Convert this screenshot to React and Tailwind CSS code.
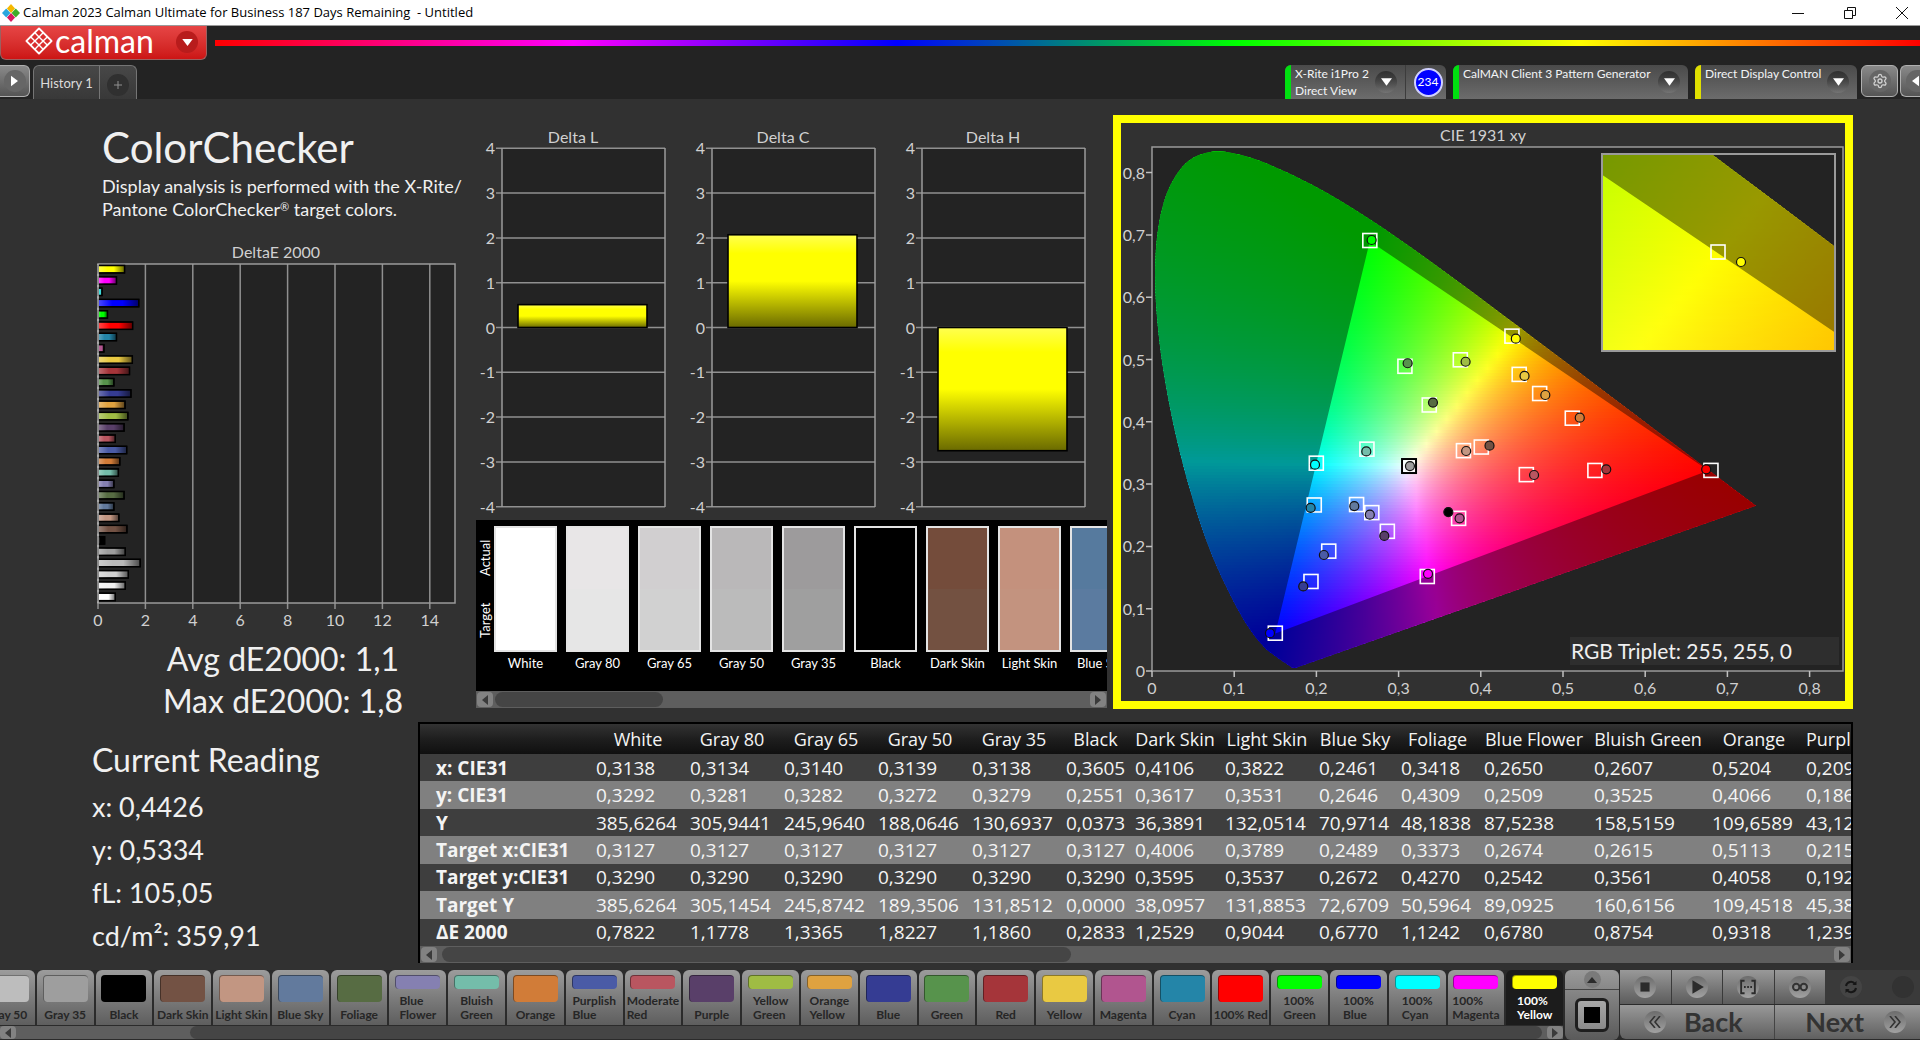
import { useState } from 'react';
import { Settings } from 'lucide-react';

const PATCHES = {
  gray50: '#b9b9b9',
  gray65: '#d0d0d0',
  gray35: '#9e9e9e',
  black: '#000000',
  darkSkin: '#735244',
  lightSkin: '#c29682',
  blueSky: '#627a9d',
  foliage: '#576c43',
  blueFlower: '#8580b1',
  bluishGreen: '#74bdaa',
  orange: '#d17c38',
  purplishBlue: '#4a5ba6',
  moderateRed: '#b95660',
  purple: '#593f69',
  yellowGreen: '#9fbc44',
  orangeYellow: '#dfa240',
  blue: '#353c93',
  green: '#57934c',
  red: '#a5353a',
  yellow: '#e9c942',
  magenta: '#b1558f',
  cyan: '#2485a8',
};

// Top to bottom, as measured
const deltaE = [
  ['#ffff00', 1.12],
  ['#ff00ff', 0.78],
  ['#40e0e0', 0.17],
  ['#0000ff', 1.72],
  ['#00ff00', 0.4],
  ['#ff0000', 1.46],
  [PATCHES.cyan, 0.78],
  [PATCHES.magenta, 0.25],
  [PATCHES.yellow, 1.45],
  [PATCHES.red, 1.33],
  [PATCHES.green, 0.67],
  [PATCHES.blue, 1.39],
  [PATCHES.orangeYellow, 1.14],
  [PATCHES.yellowGreen, 1.26],
  [PATCHES.purple, 1.1],
  [PATCHES.moderateRed, 0.73],
  [PATCHES.purplishBlue, 1.21],
  [PATCHES.orange, 0.92],
  [PATCHES.bluishGreen, 0.86],
  [PATCHES.blueFlower, 0.67],
  [PATCHES.foliage, 1.1],
  [PATCHES.blueSky, 0.67],
  [PATCHES.lightSkin, 0.88],
  [PATCHES.darkSkin, 1.22],
  ['#000000', 0.28],
  [PATCHES.gray35, 1.15],
  [PATCHES.gray50, 1.78],
  [PATCHES.gray65, 1.28],
  ['#f0f0f0', 1.15],
  ['#ffffff', 0.73],
];

const swatches = [
  { name: 'White', actual: '#ffffff', target: '#ffffff' },
  { name: 'Gray 80', actual: '#e8e6e7', target: '#e6e6e6' },
  { name: 'Gray 65', actual: '#d1cfd0', target: '#d1d1d1' },
  { name: 'Gray 50', actual: '#bab8b9', target: '#bbbbbb' },
  { name: 'Gray 35', actual: '#9d9b9c', target: '#9f9f9f' },
  { name: 'Black', actual: '#000000', target: '#000000' },
  { name: 'Dark Skin', actual: '#744c3b', target: '#735141' },
  { name: 'Light Skin', actual: '#c4917d', target: '#c3937f' },
  { name: 'Blue Sky', actual: '#567a9e', target: '#5b7ba0' },
];

const columns = [
  'White', 'Gray 80', 'Gray 65', 'Gray 50', 'Gray 35', 'Black', 'Dark Skin',
  'Light Skin', 'Blue Sky', 'Foliage', 'Blue Flower', 'Bluish Green', 'Orange', 'Purplish Blue',
];

const rows = [
  ['x: CIE31', '0,3138', '0,3134', '0,3140', '0,3139', '0,3138', '0,3605', '0,4106', '0,3822', '0,2461', '0,3418', '0,2650', '0,2607', '0,5204', '0,2091'],
  ['y: CIE31', '0,3292', '0,3281', '0,3282', '0,3272', '0,3279', '0,2551', '0,3617', '0,3531', '0,2646', '0,4309', '0,2509', '0,3525', '0,4066', '0,1862'],
  ['Y', '385,6264', '305,9441', '245,9640', '188,0646', '130,6937', '0,0373', '36,3891', '132,0514', '70,9714', '48,1838', '87,5238', '158,5159', '109,6589', '43,1207'],
  ['Target x:CIE31', '0,3127', '0,3127', '0,3127', '0,3127', '0,3127', '0,3127', '0,4006', '0,3789', '0,2489', '0,3373', '0,2674', '0,2615', '0,5113', '0,2150'],
  ['Target y:CIE31', '0,3290', '0,3290', '0,3290', '0,3290', '0,3290', '0,3290', '0,3595', '0,3537', '0,2672', '0,4270', '0,2542', '0,3561', '0,4058', '0,1924'],
  ['Target Y', '385,6264', '305,1454', '245,8742', '189,3506', '131,8512', '0,0000', '38,0957', '131,8853', '72,6709', '50,5964', '89,0925', '160,6156', '109,4518', '45,3811'],
  ['ΔE 2000', '0,7822', '1,1778', '1,3365', '1,8227', '1,1860', '0,2833', '1,2529', '0,9044', '0,6770', '1,1242', '0,6780', '0,8754', '0,9318', '1,2394'],
];

const patchButtons = [
  ['Gray 50', '#bdbdbd'],
  ['Gray 35', PATCHES.gray35],
  ['Black', PATCHES.black],
  ['Dark Skin', PATCHES.darkSkin],
  ['Light Skin', PATCHES.lightSkin],
  ['Blue Sky', PATCHES.blueSky],
  ['Foliage', PATCHES.foliage],
  ['Blue Flower', PATCHES.blueFlower, true],
  ['Bluish Green', PATCHES.bluishGreen, true],
  ['Orange', PATCHES.orange],
  ['Purplish Blue', PATCHES.purplishBlue, true],
  ['Moderate Red', PATCHES.moderateRed, true],
  ['Purple', PATCHES.purple],
  ['Yellow Green', PATCHES.yellowGreen, true],
  ['Orange Yellow', PATCHES.orangeYellow, true],
  ['Blue', PATCHES.blue],
  ['Green', PATCHES.green],
  ['Red', PATCHES.red],
  ['Yellow', PATCHES.yellow],
  ['Magenta', PATCHES.magenta],
  ['Cyan', PATCHES.cyan],
  ['100% Red', '#ff0000'],
  ['100% Green', '#00ff00', true],
  ['100% Blue', '#0000ff', true],
  ['100% Cyan', '#00ffff', true],
  ['100% Magenta', '#ff00ff', true],
  ['100% Yellow', '#ffff00', true],
];

// [target x, target y, actual x, actual y, fill]
const points = [
  [0.4006, 0.3595, 0.4106, 0.3617, PATCHES.darkSkin],
  [0.3789, 0.3537, 0.3822, 0.3531, PATCHES.lightSkin],
  [0.2489, 0.2672, 0.2461, 0.2646, PATCHES.blueSky],
  [0.3373, 0.427, 0.3418, 0.4309, PATCHES.foliage],
  [0.2674, 0.2542, 0.265, 0.2509, PATCHES.blueFlower],
  [0.2615, 0.3561, 0.2607, 0.3525, PATCHES.bluishGreen],
  [0.5113, 0.4058, 0.5204, 0.4066, PATCHES.orange],
  [0.215, 0.1924, 0.2091, 0.1862, PATCHES.purplishBlue],
  [0.4554, 0.3152, 0.4648, 0.3146, PATCHES.moderateRed],
  [0.2863, 0.2242, 0.2826, 0.2168, PATCHES.purple],
  [0.3751, 0.4995, 0.3815, 0.4964, PATCHES.yellowGreen],
  [0.4716, 0.4454, 0.4785, 0.443, PATCHES.orangeYellow],
  [0.1934, 0.1437, 0.184, 0.1357, PATCHES.blue],
  [0.3077, 0.4891, 0.311, 0.494, PATCHES.green],
  [0.5388, 0.3219, 0.5526, 0.3237, PATCHES.red],
  [0.4467, 0.4761, 0.4532, 0.4737, PATCHES.yellow],
  [0.373, 0.245, 0.3742, 0.245, PATCHES.magenta],
  [0.1974, 0.2665, 0.193, 0.2617, PATCHES.cyan],
  [0.68, 0.322, 0.6742, 0.3237, '#ff0000'],
  [0.265, 0.691, 0.2672, 0.6918, '#00ff00'],
  [0.15, 0.0607, 0.1435, 0.0607, '#0000ff'],
  [0.1999, 0.3336, 0.1983, 0.3311, '#00ffff'],
  [0.3349, 0.1517, 0.3358, 0.156, '#ff00ff'],
  [0.4379, 0.5375, 0.4426, 0.5334, '#ffff00'],
];

const locus = [
  [0.1741, 0.005], [0.1714, 0.0051], [0.1689, 0.0069], [0.1644, 0.0109], [0.1566, 0.0177],
  [0.144, 0.0297], [0.1355, 0.0399], [0.1241, 0.0578], [0.1096, 0.0868], [0.0913, 0.1327],
  [0.0687, 0.2007], [0.0454, 0.295], [0.0235, 0.4127], [0.0082, 0.5384], [0.0039, 0.6548],
  [0.0139, 0.7502], [0.0389, 0.812], [0.0743, 0.8338], [0.1142, 0.8262], [0.1547, 0.8059],
  [0.1929, 0.7816], [0.2296, 0.7543], [0.2658, 0.7243], [0.3016, 0.6923], [0.3373, 0.6589],
  [0.3731, 0.6245], [0.4087, 0.5896], [0.4441, 0.5547], [0.4788, 0.5202], [0.5125, 0.4866],
  [0.5448, 0.4544], [0.5752, 0.4242], [0.627, 0.3725], [0.6658, 0.334], [0.6915, 0.3083],
  [0.719, 0.2809], [0.7347, 0.2653],
];

const gamut = [[0.265, 0.69], [0.677, 0.322], [0.15, 0.06]];

const xyToRgb = (x, y) => {
  const z = 1 - x - y;
  const rgb = [
    2.4935 * x - 0.9314 * y - 0.4027 * z,
    -0.8295 * x + 1.7627 * y + 0.0236 * z,
    0.0358 * x - 0.0762 * y + 0.9569 * z,
  ].map(v => Math.max(v, 0));
  const max = Math.max(...rgb);
  return `rgb(${rgb.map(v => Math.round((v / max) * 255)).join(',')})`;
};

// Smooth path through the locus points (Catmull-Rom), closed by the line of purples
const locusPath = (px, py) => {
  const p = locus.map(([x, y]) => [px(x), py(y)]);
  let d = `M${p[0]}`;
  for (let i = 0; i < p.length - 1; i++) {
    const a = p[i - 1] || p[i];
    const b = p[i];
    const c = p[i + 1];
    const e = p[i + 2] || c;
    d += `C${b[0] + (c[0] - a[0]) / 6},${b[1] + (c[1] - a[1]) / 6} ${c[0] - (e[0] - b[0]) / 6},${c[1] - (e[1] - b[1]) / 6} ${c}`;
  }
  return d + 'Z';
};

const ChromaField = ({ id, left, top, width, height, x0, y0, sx, sy, stops }) => {
  const px = x => x0 + x * sx;
  const py = y => y0 - y * sy;
  const outline = locusPath(px, py);
  const triangle = `M${gamut.map(([x, y]) => `${px(x)},${py(y)}`).join('L')}Z`;
  const step = 3;
  const lines = Array.from({ length: Math.ceil(height / step) }, (_, i) => top + i * step);

  return (
    <g clipPath={`url(#${id}-box)`}>
      <defs>
        <clipPath id={`${id}-box`}>
          <rect x={left} y={top} width={width} height={height} />
        </clipPath>
        <clipPath id={`${id}-locus`}>
          <path d={outline} />
        </clipPath>
        {lines.map((y, i) => (
          <linearGradient key={i} id={`${id}-${i}`}>
            {Array.from({ length: stops + 1 }, (_, s) => (
              <stop
                key={s}
                offset={s / stops}
                stopColor={xyToRgb((left + (width * s) / stops - x0) / sx, (y0 - y - step / 2) / sy)}
              />
            ))}
          </linearGradient>
        ))}
      </defs>
      <g clipPath={`url(#${id}-locus)`}>
        {lines.map((y, i) => (
          <rect key={i} x={left} y={y} width={width} height={step + 1} fill={`url(#${id}-${i})`} />
        ))}
        <path d={outline + triangle} fillRule="evenodd" fill="#000" fillOpacity="0.4" />
      </g>
    </g>
  );
};

const Target = ({ x, y }) => (
  <rect x={x - 7} y={y - 7} width="14" height="14" fill="none" stroke="#fff" strokeWidth="1.6" />
);

const Actual = ({ x, y, fill }) => (
  <circle cx={x} cy={y} r="4.5" fill={fill} stroke="#111" strokeWidth="1.2" />
);

const CieChart = () => {
  const px = x => 31 + x * 822;
  const py = y => 548 - y * 623;
  return (
    <svg viewBox="0 0 724 578" className="block w-full h-auto" role="img" aria-label="CIE 1931 xy">
      <text x="362" y="18" textAnchor="middle" fontSize="16" fill="#d0d0d0">CIE 1931 xy</text>
      <rect x="31" y="24" width="691" height="524" fill="#232323" />
      <ChromaField id="cie" left={31} top={25} width={610} height={523} x0={31} y0={548} sx={822} sy={623} stops={60} />
      <rect x="31" y="24" width="691" height="524" fill="none" stroke="#9a9a9a" strokeWidth="1.5" />
      {[0, 1, 2, 3, 4, 5, 6, 7, 8].map(n => (
        <g key={n} fontSize="16" fill="#d0d0d0">
          <path d={`M${px(n / 10)} 548v6M31 ${py(n / 10)}h-6`} stroke="#c0c0c0" strokeWidth="1.5" />
          <text x={px(n / 10)} y="571" textAnchor="middle">{n ? `0,${n}` : '0'}</text>
          <text x="24" y={py(n / 10) + 6} textAnchor="end">{n ? `0,${n}` : '0'}</text>
        </g>
      ))}

      {points.map(([tx, ty], i) => <Target key={i} x={px(tx)} y={py(ty)} />)}
      {points.map(([, , ax, ay, fill], i) => <Actual key={i} x={px(ax)} y={py(ay)} fill={fill} />)}
      <Actual x={px(0.3605)} y={py(0.2551)} fill="#000" />

      {/* White point */}
      <rect x={px(0.3127) - 7} y={py(0.329) - 7} width="14" height="14" fill="none" stroke="#000" strokeWidth="2" />
      <rect x={px(0.3127) - 5} y={py(0.329) - 5} width="10" height="10" fill="none" stroke="#fff" strokeWidth="1.5" />
      <Actual x={px(0.3138)} y={py(0.329)} fill="#9e9e9e" />

      {/* Magnified view of the current reading */}
      <rect x="481" y="31" width="233" height="197" fill="#232323" />
      <ChromaField
        id="zoom" left={481} top={31} width={233} height={197}
        x0={597 - 0.4379 * 4932} y0={129 + 0.5359 * 3737} sx={4932} sy={3737} stops={24}
      />
      <rect x="481" y="31" width="233" height="197" fill="none" stroke="#9a9a9a" strokeWidth="2" />
      <Target x={597} y={129} />
      <Actual x={620} y={139} fill="#ffff00" />

      <rect x="449" y="514" width="269" height="28" fill="#2e2e2e" />
      <text x="450" y="536" fontSize="21" fill="#f0f0f0">RGB Triplet: 255, 255, 0</text>
    </svg>
  );
};

const DeltaEChart = () => (
  <svg viewBox="0 0 388 388" className="block w-full h-auto" role="img" aria-label="DeltaE 2000">
    <defs>
      <linearGradient id="bar-shade">
        <stop offset="0" stopColor="#fff" stopOpacity="0.3" />
        <stop offset="0.35" stopColor="#fff" stopOpacity="0" />
        <stop offset="0.6" stopColor="#000" stopOpacity="0" />
        <stop offset="1" stopColor="#000" stopOpacity="0.6" />
      </linearGradient>
    </defs>
    <text x="196" y="16" textAnchor="middle" fontSize="16" fill="#d0d0d0">DeltaE 2000</text>
    <rect x="18" y="22" width="357" height="339" fill="#232323" />
    {[0, 2, 4, 6, 8, 10, 12, 14].map(n => (
      <g key={n}>
        <path d={`M${18 + n * 23.7} 22V367`} stroke="#909090" strokeWidth="1.5" />
        <text x={18 + n * 23.7} y="384" textAnchor="middle" fontSize="16" fill="#d0d0d0">{n}</text>
      </g>
    ))}
    <rect x="18" y="22" width="357" height="339" fill="none" stroke="#9a9a9a" strokeWidth="1.5" />
    {deltaE.map(([color, value], i) => {
      const y = 23.5 + i * 11.3;
      return (
        <g key={i} stroke="#000" strokeWidth="1.3">
          <rect x="18" y={y} width={value * 23.7} height="7.4" fill={color} />
          <rect x="18" y={y} width={value * 23.7} height="7.4" fill="url(#bar-shade)" />
        </g>
      );
    })}
    <path d="M18 22V361" stroke="#b0b0b0" strokeWidth="1.5" />
  </svg>
);

const DeltaChart = ({ title, value }) => {
  const zero = 202.5;
  const unit = 44.8;
  const top = value > 0 ? zero - value * unit : zero;
  return (
    <svg viewBox="0 0 210 392" className="block w-[210px] h-auto" role="img" aria-label={title}>
      <defs>
        <linearGradient id="delta-bar" x1="0" y1="0" x2="0" y2="1">
          <stop offset="0" stopColor="#ffff50" />
          <stop offset="0.2" stopColor="#ffff00" />
          <stop offset="0.5" stopColor="#ffff00" />
          <stop offset="1" stopColor="#6a6a00" />
        </linearGradient>
      </defs>
      <text x="105" y="18" textAnchor="middle" fontSize="16" fill="#d0d0d0">{title}</text>
      <rect x="34" y="23" width="163" height="359" fill="#232323" />
      {[4, 3, 2, 1, 0, -1, -2, -3, -4].map(n => (
        <g key={n}>
          <path d={`M28 ${zero - n * unit}H197`} stroke="#909090" strokeWidth="1.5" />
          <text x="27" y={zero - n * unit + 6} textAnchor="end" fontSize="16" fill="#d0d0d0">{n}</text>
        </g>
      ))}
      <path d="M34 23V382M197 23V382" stroke="#9a9a9a" strokeWidth="1.5" />
      <rect x="50" y={top} width="129" height={Math.abs(value) * unit} fill="url(#delta-bar)" stroke="#000" strokeWidth="1.6" />
    </svg>
  );
};

const ArrowDown = () => (
  <span className="flex size-[22px] shrink-0 items-center justify-center rounded-full bg-linear-to-b from-black/40 to-white/10">
    <svg viewBox="0 0 12 8" className="w-[11px] h-2"><path d="M0 0h12L6 8z" fill="#fff" /></svg>
  </span>
);

const ScrollArrow = ({ left, label }) => (
  <button type="button" aria-label={label} className="flex w-4 h-full shrink-0 items-center justify-center rounded-sm bg-[#828282]">
    <svg viewBox="0 0 6 10" className="h-[10px] w-[6px]">
      <path d={left ? 'M6 0v10L0 5z' : 'M0 0v10l6-5z'} fill="#3a3a3a" />
    </svg>
  </button>
);

const ScrollBar = ({ before = 'w-[2px]', thumb }) => (
  <div className="flex h-[17px] w-full items-stretch bg-[#5e5e5e] p-px">
    <ScrollArrow left label="Scroll left" />
    <div className="flex flex-1">
      <div className={before} />
      <div className={`${thumb} rounded-lg bg-[#454545]`} />
    </div>
    <ScrollArrow label="Scroll right" />
  </div>
);

const DeviceTab = ({ strip, className, children, extra }) => (
  <div className={`flex h-[34px] overflow-hidden rounded-t-md bg-linear-to-b from-[#4a4a4a] to-[#6c6c6c] ${className}`}>
    <span className={`w-[6px] shrink-0 ${strip}`} />
    <button type="button" aria-haspopup="menu" className="flex flex-1 justify-between pl-1 pr-2 text-left text-xs leading-[17px] whitespace-nowrap text-gray-100">
      <span>{children}</span>
      <span className="flex h-full items-center"><ArrowDown /></span>
    </button>
    {extra}
  </div>
);

const TitleBar = () => (
  <header className="flex h-[26px] items-center border-b border-[#9a9a9a] bg-white pl-[2px] font-['Open_Sans',sans-serif] text-black">
    <svg viewBox="0 0 20 20" className="size-[18px]">
      <path d="M10 0l4.500 5-4.500 5-4.500-5z" fill="#f5b800" />
      <path d="M4.700 5l4.700 5-4.700 5L0 10z" fill="#2aa6dd" />
      <path d="M15.300 5l4.700 5-4.700 5-4.700-5z" fill="#3fae2a" />
      <path d="M10 10l4.500 5-4.500 5-4.500-5z" fill="#d81b60" />
    </svg>
    <span className="ml-[3px] flex-1 text-[13px] whitespace-pre">Calman 2023 Calman Ultimate for Business 187 Days Remaining  - Untitled</span>
    <div className="flex gap-10 pr-3">
      <button type="button" aria-label="Minimize">
        <svg viewBox="0 0 12 12" className="size-3"><path d="M0 6.500h12" stroke="#111" /></svg>
      </button>
      <button type="button" aria-label="Restore">
        <svg viewBox="0 0 12 12" className="size-3" fill="none" stroke="#111">
          <path d="M.5 3.500h8v8h-8zM3.500 3.500v-3h8v8h-3" />
        </svg>
      </button>
      <button type="button" aria-label="Close">
        <svg viewBox="0 0 12 12" className="size-3"><path d="M0 0l12 12M12 0L0 12" stroke="#111" /></svg>
      </button>
    </div>
  </header>
);

const Toolbar = () => (
  <div className="bg-[#232323]">
    <div className="flex h-[34px] items-start">
      <button type="button" aria-haspopup="menu" className="flex h-[34px] w-[207px] items-center rounded-b-md border border-t-0 border-[#9b6060] bg-linear-to-b from-[#e64545] to-[#cc1414] pb-[3px] pl-6 text-white">
        <svg viewBox="0 0 28 28" className="size-7">
          <path d="M14 1.500L26.500 14 14 26.500 1.500 14z" fill="#fff" stroke="#fff" strokeWidth="2" strokeLinejoin="round" />
          <g fill="#d92e2e">
            <path d="M14 2.700l3.100 3.100-3.100 3.100-3.100-3.100z" />
            <path d="M9.900 6.800l3.100 3.100-3.100 3.100-3.100-3.100z" />
            <path d="M18.100 6.800l3.100 3.100-3.100 3.100-3.100-3.100z" />
            <path d="M5.800 10.900l3.100 3.100-3.100 3.100L2.700 14z" />
            <path d="M14 10.900l3.100 3.100-3.100 3.100-3.100-3.100z" />
            <path d="M22.200 10.900l3.100 3.100-3.100 3.100-3.100-3.100z" />
            <path d="M9.900 15l3.100 3.100-3.100 3.100-3.100-3.100z" />
            <path d="M18.100 15l3.100 3.100-3.100 3.100-3.100-3.100z" />
            <path d="M14 19.100l3.100 3.100-3.100 3.100-3.100-3.100z" />
          </g>
        </svg>
        <span className="ml-[2px] flex-1 text-left text-[32px] leading-[28px]">calman</span>
        <span className="mt-[2px] mr-2 flex size-[22px] items-center justify-center rounded-full bg-[#b81c1c]">
          <svg viewBox="0 0 12 8" className="w-[11px] h-[7px]"><path d="M0 0h12L6 8z" fill="#fff" /></svg>
        </span>
      </button>
      <div className="mt-[14px] ml-2 h-[6px] flex-1 bg-[linear-gradient(90deg,#f00_0%,#f0f_21%,#00f_40%,#0f0_60%,#ff0_80%,#f00_100%)]" />
    </div>

    <div className="mt-[5px] flex h-[34px] overflow-hidden">
      <button type="button" aria-label="Show panel" className="flex h-8 w-[30px] items-center justify-center rounded-r-md border border-l-0 border-[#b0b0b0] bg-linear-to-b from-[#8a8a8a] to-[#555]">
        <span className="flex size-[22px] items-center justify-center rounded-full bg-[#666]">
          <svg viewBox="0 0 8 12" className="w-[7px] h-3"><path d="M0 0v12l8-6z" fill="#fff" /></svg>
        </span>
      </button>
      <div className="ml-[3px] flex rounded-t-md border border-b-0 border-[#757575] bg-linear-to-b from-[#484848] to-[#383838] text-[#dcdcdc]">
        <button type="button" className="w-[66px] border-r border-[#757575] pt-[2px] text-[13px]">History 1</button>
        <button type="button" aria-label="Add history" className="flex w-[36px] items-center justify-center pt-1">
          <span className="flex size-[22px] items-center justify-center rounded-full bg-[#303030]">
            <svg viewBox="0 0 8 8" className="size-2"><path d="M4 0v8M0 4h8" stroke="#909090" /></svg>
          </span>
        </button>
      </div>
      <div className="flex-1" />
      <DeviceTab
        strip="bg-[#00e010]"
        className="w-[161px]"
        extra={
          <div className="flex w-[41px] items-center justify-center border-l border-[#3c3c3c] pl-1">
            <span className="flex size-[29px] items-center justify-center rounded-full border-2 border-[#d0d0ff] bg-[#0000ff] text-xs text-white">234</span>
          </div>
        }
      >
        X-Rite i1Pro 2<br />Direct View
      </DeviceTab>
      <DeviceTab strip="bg-[#00e010]" className="ml-[7px] w-[235px]">CalMAN Client 3 Pattern Generator</DeviceTab>
      <DeviceTab strip="bg-[#e0e000]" className="ml-[7px] w-[162px]">Direct Display Control</DeviceTab>
      <button type="button" aria-label="Settings" className="ml-1 flex h-8 w-[37px] items-center justify-center rounded-md border border-[#b0b0b0] bg-linear-to-b from-[#8a8a8a] to-[#555]">
        <span className="flex size-[22px] items-center justify-center rounded-full bg-[#666]">
          <Settings className="size-4 text-[#d0d0d0]" />
        </span>
      </button>
      <button type="button" aria-label="Hide panel" className="ml-[2px] flex h-8 w-5 items-center justify-end rounded-l-md border border-r-0 border-[#b0b0b0] bg-linear-to-b from-[#8a8a8a] to-[#555]">
        <span className="flex h-[22px] w-[14px] items-center justify-end rounded-l-full bg-[#666] pr-px">
          <svg viewBox="0 0 8 12" className="w-[7px] h-3"><path d="M8 0v12L0 6z" fill="#fff" /></svg>
        </span>
      </button>
    </div>
  </div>
);

const SwatchPanel = () => (
  <div className="mt-[3px] ml-2">
    <div className="flex h-[171px] overflow-hidden bg-black pt-[6px] text-white">
      <div className="flex h-[126px] w-[18px] shrink-0 flex-col items-center text-[13px] leading-[16px]">
        <span className="h-[63px] rotate-180 text-center [writing-mode:vertical-rl]">Actual</span>
        <span className="h-[63px] rotate-180 text-center [writing-mode:vertical-rl]">Target</span>
      </div>
      <div className="flex gap-[9px]">
        {swatches.map(s => (
          <div key={s.name} className="w-[63px] shrink-0 text-center">
            <div className="flex h-[126px] flex-col border-2 border-[#e4e4e4]">
              <div className="flex-1" style={{ backgroundColor: s.actual }} />
              <div className="flex-1" style={{ backgroundColor: s.target }} />
            </div>
            <div className="mt-[2px] text-[13px] leading-[18px] whitespace-nowrap">{s.name}</div>
          </div>
        ))}
      </div>
    </div>
    <ScrollBar thumb="w-[168px]" />
  </div>
);

const DataTable = () => (
  <div className="min-w-0 flex-1 overflow-hidden border-2 border-b-0 border-black font-['Open_Sans',sans-serif] text-[#f4f4f4]">
    <div className="overflow-hidden">
      <table className="h-[222px] w-[1494px] table-fixed border-collapse text-left text-[19px] leading-[22px] whitespace-nowrap">
        <colgroup>
          <col className="w-[176px]" />
          <col className="w-[94px]" />
          <col className="w-[94px]" />
          <col className="w-[94px]" />
          <col className="w-[94px]" />
          <col className="w-[94px]" />
          <col className="w-[69px]" />
          <col className="w-[90px]" />
          <col className="w-[94px]" />
          <col className="w-[82px]" />
          <col className="w-[83px]" />
          <col className="w-[110px]" />
          <col className="w-[118px]" />
          <col className="w-[94px]" />
          <col className="w-[108px]" />
        </colgroup>
        <thead>
          <tr className="h-[30px] bg-linear-to-b from-[#333] via-[#1e1e1e] to-[#101010] text-lg">
            <td />
            {columns.map(c => (
              <th key={c} scope="col" className="pr-[10px] text-center font-normal last:pr-0 last:text-left">{c}</th>
            ))}
          </tr>
        </thead>
        <tbody>
          {rows.map(([label, ...cells]) => (
            <tr key={label} className="bg-[#3e3e3e] even:bg-[#808080]">
              <th scope="row" className="pl-4 font-bold">{label}</th>
              {cells.map((c, i) => <td key={i}>{c}</td>)}
            </tr>
          ))}
        </tbody>
      </table>
    </div>
    <ScrollBar before="w-[5px]" thumb="w-[629px]" />
  </div>
);

const RoundIcon = ({ children }) => (
  <span className="flex size-[22px] items-center justify-center rounded-full bg-linear-to-b from-[#6c6c6c] to-[#a2a2a2]">{children}</span>
);

const transport = [
  ['Stop', <path key="i" d="M3 3h8v8H3z" fill="#2b2b2b" />],
  ['Play', <path key="i" d="M3 1l10 6-10 6z" fill="#2b2b2b" />],
  ['Read series', (
    <g key="i" stroke="#2b2b2b" strokeWidth="1.600" fill="none">
      <path d="M4 1.500H1v11h3M10 1.500h3v11h-3" /><path d="M3.500 7h1.500M6.300 7h1.500M9 7h1.500" />
    </g>
  )],
  ['Read continuous', (
    <g key="i" stroke="#333" strokeWidth="1.800" fill="none">
      <circle cx="3.700" cy="7" r="2.800" /><circle cx="10.300" cy="7" r="2.800" />
    </g>
  )],
];

const PatternBar = () => {
  const [selected, setSelected] = useState('100% Yellow');
  return (
    <footer className="flex h-[70px] bg-[#2b2b2b]">
      <div className="flex min-w-0 flex-1 flex-col overflow-hidden">
        <div className="-ml-[22px] flex h-[55px] gap-[2px]">
          {patchButtons.map(([name, color, twoLines]) => {
            const active = name === selected;
            return (
              <button
                key={name}
                type="button"
                aria-pressed={active}
                onClick={() => setSelected(name)}
                className={`flex min-w-0 flex-1 basis-0 flex-col items-center justify-between overflow-hidden rounded-t-md pt-[5px] pb-[3px] text-xs leading-[14px] font-bold ${
                  active ? 'bg-[#1c1c1c] text-white' : 'bg-linear-to-b from-[#9c9c9c] to-[#5e5e5e] text-[#262626]'
                }`}
              >
                <span
                  className={`w-[45px] rounded-[4px] border-t border-l border-black/40 ${twoLines ? 'h-[14px]' : 'h-[27px]'}`}
                  style={{ backgroundColor: color }}
                />
                <span className={twoLines ? 'w-min text-left' : 'whitespace-nowrap'}>{name}</span>
              </button>
            );
          })}
        </div>
        <div className="mt-px flex h-[13px] bg-[#5e5e5e]">
          <ScrollArrow left label="Scroll patches left" />
          <div className="ml-[174px] flex-1 rounded-lg bg-[#454545]" />
          <div className="w-[5px]" />
          <ScrollArrow label="Scroll patches right" />
        </div>
      </div>

      <div className="ml-[2px] flex w-[54px] flex-col overflow-hidden rounded-md bg-linear-to-b from-[#9a9a9a] to-[#5a5a5a]">
        <button type="button" aria-label="Expand" className="flex h-[20px] items-center justify-center border-b border-[#444]">
          <span className="flex size-[17px] items-center justify-center rounded-full bg-[#7a7a7a]">
            <svg viewBox="0 0 10 6" className="h-[6px] w-[10px]"><path d="M0 6h10L5 0z" fill="#2b2b2b" /></svg>
          </span>
        </button>
        <button type="button" aria-label="Current pattern" className="m-auto flex size-[34px] items-center justify-center rounded-md border-[3px] border-[#1e1e1e] bg-linear-to-b from-[#a8a8a8] to-[#8a8a8a]">
          <span className="size-4 bg-black" />
        </button>
      </div>

      <div className="ml-px w-[300px] overflow-hidden">
        <div className="grid h-[34px] w-[308px] grid-cols-6 gap-px bg-[#3a3a3a]">
          {transport.map(([label, icon]) => (
            <button key={label} type="button" aria-label={label} className="flex items-center justify-center bg-linear-to-b from-[#999] to-[#5c5c5c]">
              <RoundIcon><svg viewBox="0 0 14 14" className="size-4">{icon}</svg></RoundIcon>
            </button>
          ))}
          <button type="button" disabled aria-label="Refresh" className="flex items-center justify-center bg-[#3a3a3a]">
            <span className="flex size-[22px] items-center justify-center rounded-full bg-[#444]">
              <svg viewBox="0 0 14 14" className="size-[14px]" fill="none" stroke="#161616" strokeWidth="2">
                <path d="M2 6a5 5 0 0 1 9-2M12 8a5 5 0 0 1-9 2" />
                <path d="M12.500 1v4h-4zM1.500 13V9h4z" fill="#161616" stroke="none" />
              </svg>
            </span>
          </button>
          <button type="button" disabled aria-label="Record" className="flex items-center justify-center bg-[#3a3a3a]">
            <span className="size-[22px] rounded-full bg-[#323232]" />
          </button>
        </div>
        <div className="mt-px flex h-[34px] text-[27px] leading-[34px] font-bold text-[#333]">
          <button type="button" className="flex w-[155px] items-center gap-[18px] rounded-bl-md border-r border-[#444] bg-linear-to-b from-[#999] to-[#606060] pl-6">
            <RoundIcon>
              <svg viewBox="0 0 12 12" className="size-3" fill="none" stroke="#333" strokeWidth="1.600"><path d="M6 0L1 6l5 6M11 0L6 6l5 6" /></svg>
            </RoundIcon>
            Back
          </button>
          <button type="button" className="flex flex-1 items-center justify-end gap-[20px] bg-linear-to-b from-[#999] to-[#606060] pr-[14px]">
            Next
            <RoundIcon>
              <svg viewBox="0 0 12 12" className="size-3" fill="none" stroke="#333" strokeWidth="1.600"><path d="M1 0l5 6-5 6M6 0l5 6-5 6" /></svg>
            </RoundIcon>
          </button>
        </div>
      </div>
    </footer>
  );
};

const App = () => (
  <div className="flex min-h-screen flex-col overflow-x-hidden bg-[#313131] font-['Lato','Open_Sans',sans-serif] text-[#f0f0f0]">
    <TitleBar />
    <Toolbar />

    <main className="flex-1 pr-[67px] pl-20">
      <div className="flex">
        <section className="w-[388px] pt-6">
          <div className="pl-[22px]">
            <h1 className="text-[42px] leading-[48px]">ColorChecker</h1>
            <p className="mt-1 text-lg leading-[23px] whitespace-nowrap">
              Display analysis is performed with the X-Rite/<br />
              Pantone ColorChecker<sup className="text-[11px]">®</sup> target colors.
            </p>
          </div>
          <div className="mt-[21px]"><DeltaEChart /></div>
          <div className="mt-2 pr-[18px] pl-9 text-center text-[32px] leading-[42px]">
            <p>Avg dE2000: 1,1</p>
            <p>Max dE2000: 1,8</p>
          </div>
        </section>

        <section className="w-[639px] pt-[26px]">
          <div className="flex">
            <DeltaChart title="Delta L" value={0.51} />
            <DeltaChart title="Delta C" value={2.07} />
            <DeltaChart title="Delta H" value={-2.75} />
          </div>
          <SwatchPanel />
        </section>

        <section className="mt-4 ml-[6px] min-w-0 flex-1 self-start border-8 border-[#ffff00]">
          <CieChart />
        </section>
      </div>

      <div className="flex">
        <section className="w-[338px] pt-4 pl-3 text-[27px] leading-[43px]">
          <h2 className="mb-1 text-[32px]">Current Reading</h2>
          <p>x: 0,4426</p>
          <p>y: 0,5334</p>
          <p>fL: 105,05</p>
          <p>cd/m²: 359,91</p>
        </section>
        <DataTable />
      </div>
    </main>

    <PatternBar />
  </div>
);

export default App;
